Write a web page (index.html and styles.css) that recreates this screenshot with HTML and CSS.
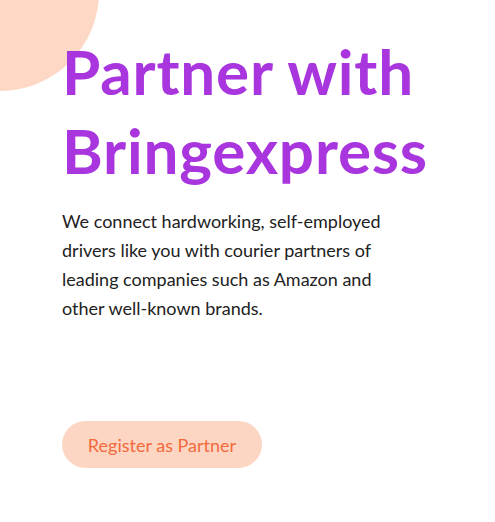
FILE: index.html
```html
<!DOCTYPE html>
<html lang="en">
<head>
<meta charset="utf-8">
<link rel="stylesheet" href="styles.css">
</head>
<body>
<div class="blob"></div>
<section class="hero">
  <h1 class="title">Partner with<br>Bringexpress</h1>
  <p class="lead">We connect hardworking, self-employed drivers like you with courier partners of leading companies such as Amazon and other well-known brands.</p>
  <a class="cta" href="#">Register as Partner</a>
</section>
</body>
</html>
```
FILE: styles.css
```css
html, body {
  margin: 0;
  padding: 0;
  background: #ffffff;
}
body {
  font-family: Lato, "Noto Sans", sans-serif;
  position: relative;
  overflow: hidden;
  width: 495px;
  height: 522px;
}
.blob {
  position: absolute;
  left: -99px;
  top: -107px;
  width: 198px;
  height: 198px;
  border-radius: 50%;
  background: #fcd8c5;
}
.hero {
  position: relative;
  padding: 32px 0 0 62px;
  display: flex;
  flex-direction: column;
  align-items: flex-start;
}
.title {
  margin: 0;
  font-size: 62px;
  line-height: 79px;
  letter-spacing: 0.8px;
  font-weight: 700;
  color: #a835dd;
}
.lead {
  margin: 17px 0 0 0;
  width: 330px;
  font-size: 18px;
  line-height: 29px;
  color: #222222;
}
.cta {
  margin-top: 98px;
  width: 200px;
  height: 47px;
  border-radius: 24px;
  background: #fcd6c3;
  color: #f26a3c;
  font-size: 18px;
  text-decoration: none;
  display: flex;
  align-items: center;
  justify-content: center;
}
```
